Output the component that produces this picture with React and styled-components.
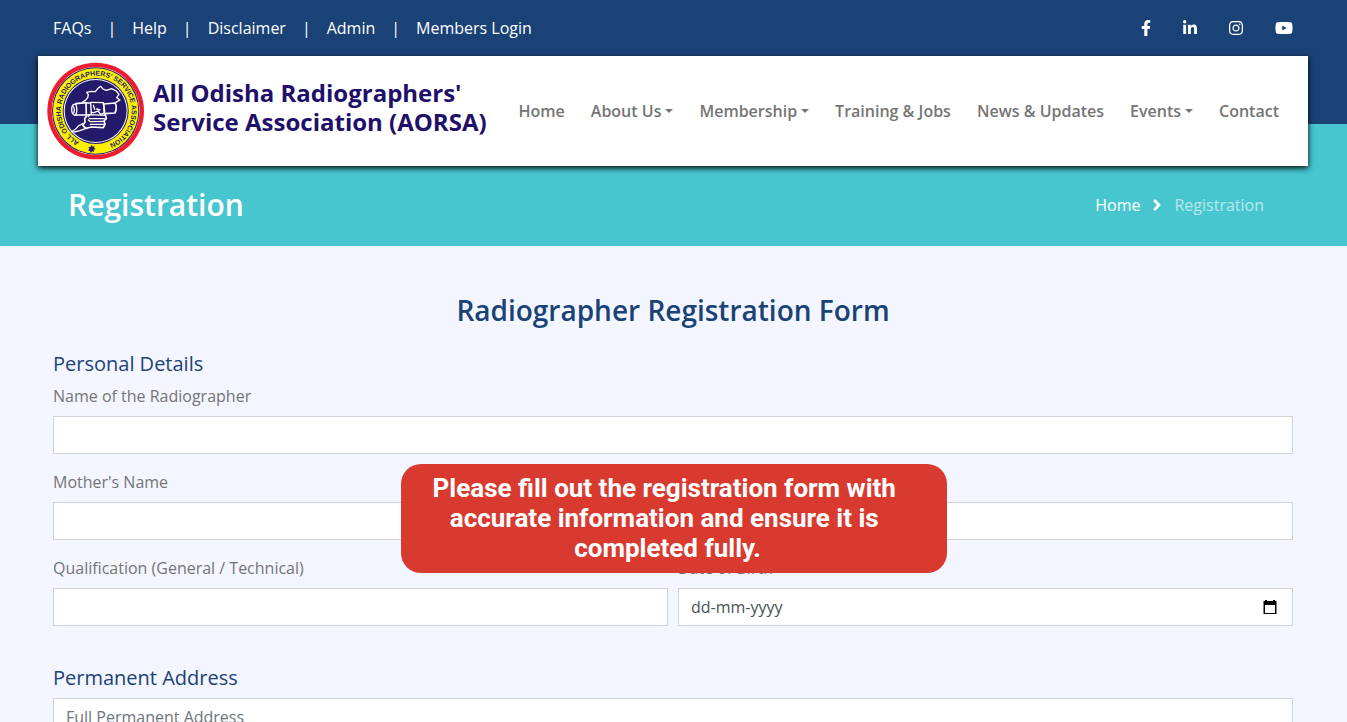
import React from "react";
import styled, { createGlobalStyle } from "styled-components";
import {
  FaFacebookF,
  FaLinkedinIn,
  FaInstagram,
  FaYoutube,
  FaAngleRight,
} from "react-icons/fa";

const topLinks = ["FAQs", "Help", "Disclaimer", "Admin", "Members Login"];

const socials = [
  { label: "Facebook", Icon: FaFacebookF, width: 10 },
  { label: "LinkedIn", Icon: FaLinkedinIn, width: 14 },
  { label: "Instagram", Icon: FaInstagram, width: 14 },
  { label: "YouTube", Icon: FaYoutube, width: 18 },
];

const navItems = [
  { label: "Home" },
  { label: "About Us", menu: true },
  { label: "Membership", menu: true },
  { label: "Training & Jobs" },
  { label: "News & Updates" },
  { label: "Events", menu: true },
  { label: "Contact" },
];

const Emblem = () => (
  <EmblemSvg viewBox="0 0 300 300" role="img" aria-label="AORSA emblem">
    <defs>
      <path id="ring" d="M100 243 A106 106 0 1 1 176 253" />
    </defs>
    <circle cx="149" cy="150" r="145" fill="#ed1c2e" />
    <circle cx="149" cy="150" r="132" fill="#fff" />
    <circle cx="149" cy="150" r="131" fill="#241a6b" />
    <circle cx="149" cy="150" r="128" fill="#fdf100" />
    <circle cx="149" cy="150" r="99" fill="#241a6b" />
    <circle cx="149" cy="150" r="96" fill="#fff" />
    <circle cx="149" cy="150" r="93" fill="#241a6b" />
    <EmblemText>
      <textPath href="#ring">ALL ODISHA RADIOGRAPHERS&apos; SERVICE ASSOCIATION</textPath>
    </EmblemText>
    <path
      d="M137 252 l3 5 6 -2 -2 6 5 3 -6 3 1 6 -6 -2 -4 5 -2 -6 -6 -1 4 -5 -3 -5 6 -1z"
      fill="#241a6b"
    />
    <g
      transform="translate(72 72)"
      fill="none"
      stroke="#fff"
      strokeWidth="4"
      strokeLinejoin="round"
      strokeLinecap="round"
    >
      {/* state outline */}
      <path d="M38 51 L46 46 L53 38 L55 29 L50 22 L62 19 L76 20 L84 10 L92 4 L99 12 L109 16 L125 11 L139 18 L147 28 L140 38 L150 45 L136 53" />
      {/* camera */}
      <path d="M17 57 Q5 57 5 73 Q5 91 17 91 Q24 74 17 57z" />
      <path d="M11 66 Q15 74 11 84" />
      <path d="M18 56 L48 53 L49 90 L18 90" strokeWidth="5" />
      <path d="M49 54 L62 54 L64 88 L49 90" />
      <path d="M62 52 L100 53 L103 84 L92 88 L84 78 L72 83 L64 82" />
      <path d="M70 61 L74 73 M80 72 L90 75" />
      <path d="M101 57 L136 54 Q142 70 135 84 L104 86z" strokeWidth="5" />
      {/* fist */}
      <path d="M50 92 L44 101 L45 112 L38 121 L48 130 L64 126 L100 128 L105 118 L102 108 L109 101 L106 88" strokeWidth="5" />
      <path d="M55 95 L60 89 L106 91 M58 101 L103 101 M55 105 L61 110 L102 109 M61 118 L102 118" />
      <path d="M5 140 Q20 132 25 123 L38 116 M12 141 L30 137 L48 130" />
    </g>
  </EmblemSvg>
);

const Field = ({ id, label, children }) => (
  <Group>
    <Label htmlFor={id}>{label}</Label>
    {children || <Input id={id} type="text" />}
  </Group>
);

const App = () => {
  return (
    <>
      <GlobalStyle />
      <Header>
        <TopBar>
          <TopLinks aria-label="Quick links">
            {topLinks.map((text, i) => (
              <React.Fragment key={text}>
                {i > 0 && <span>|</span>}
                <a href="#">{text}</a>
              </React.Fragment>
            ))}
          </TopLinks>
          <Socials>
            {socials.map(({ label, Icon, width }) => (
              <SocialLink href="#" key={label} aria-label={label} $width={width}>
                <Icon />
              </SocialLink>
            ))}
          </Socials>
        </TopBar>

        <NavBar>
          <Brand href="#">
            <Emblem />
            <BrandName>
              All Odisha Radiographers&apos;
              <br />
              Service Association (AORSA)
            </BrandName>
          </Brand>
          <Nav>
            {navItems.map(({ label, menu }) => (
              <NavLink href="#" key={label} $menu={menu}>
                {label}
              </NavLink>
            ))}
          </Nav>
        </NavBar>

        <TitleBar>
          <PageTitle>Registration</PageTitle>
          <Breadcrumb aria-label="Breadcrumb">
            <a href="#">Home</a>
            <FaAngleRight />
            <span>Registration</span>
          </Breadcrumb>
        </TitleBar>
      </Header>

      <Main>
        <FormTitle>Radiographer Registration Form</FormTitle>
        <form>
          <SectionTitle>Personal Details</SectionTitle>
          <Field id="name" label="Name of the Radiographer" />
          <Field id="mother" label="Mother's Name" />
          <Columns>
            <Field id="qualification" label="Qualification (General / Technical)" />
            <Field id="dob" label="Date of Birth">
              <DateBox>
                <DateInput id="dob" type="text" placeholder="dd-mm-yyyy" />
                <DateButton type="button" aria-label="Open calendar">
                  <svg width="14" height="15" viewBox="0 0 14 15">
                    <path d="M2 0h2v1h6V0h2v1h1.500v13H.500V1H2z" />
                    <path d="M2 5h10v8H2z" fill="#fff" />
                  </svg>
                </DateButton>
              </DateBox>
            </Field>
          </Columns>
          <Section>
            <SectionTitle as="label" htmlFor="address">
              Permanent Address
            </SectionTitle>
            <TextArea id="address" rows="3" placeholder="Full Permanent Address" />
          </Section>
        </form>
      </Main>

      <Notice role="alert">
        Please fill out the registration form with&nbsp;
        <br />
        accurate information and ensure it is&nbsp;
        <br />
        completed fully.
      </Notice>
    </>
  );
};

export default App;

/* Styled Components */
const GlobalStyle = createGlobalStyle`
  *, *::before, *::after {
    box-sizing: border-box;
  }

  html {
    scrollbar-width: none;
  }

  body {
    margin: 0;
    background: #f3f6ff;
    color: #757575;
    font-family: "Open Sans", sans-serif;
    font-size: 16px;
    line-height: 24px;
  }

  a {
    color: inherit;
    text-decoration: none;
  }
`;

const Header = styled.header`
  padding: 0 39px 0 38px;
  background: linear-gradient(#1a4276 124px, #47c6d0 124px);
`;

const TopBar = styled.div`
  display: flex;
  align-items: center;
  justify-content: space-between;
  height: 56px;
  padding: 0 15px;
  color: #fff;
`;

const TopLinks = styled.nav`
  display: flex;
  gap: 16px;
`;

const Socials = styled.div`
  display: flex;
  gap: 32px;
`;

const SocialLink = styled.a`
  display: flex;

  svg {
    width: ${({ $width }) => $width}px;
    height: 16px;
  }
`;

const NavBar = styled.div`
  display: flex;
  align-items: center;
  justify-content: space-between;
  height: 110px;
  padding: 0 29px 0 8px;
  background: #fff;
  box-shadow: 0 2px 6px #000;
`;

const Brand = styled.a`
  display: flex;
  align-items: center;
  gap: 7px;
`;

const EmblemSvg = styled.svg`
  width: 100px;
  height: 100px;
`;

const EmblemText = styled.text`
  fill: #241a6b;
  font-family: "Liberation Sans", sans-serif;
  font-size: 21px;
  font-weight: 700;
`;

const BrandName = styled.span`
  padding-bottom: 8px;
  color: #20106a;
  font-size: 24px;
  font-weight: 700;
  line-height: 29px;
`;

const Nav = styled.nav`
  display: flex;
  gap: 26px;
`;

const NavLink = styled.a`
  font-weight: 600;
  white-space: nowrap;

  &::after {
    content: "";
    display: ${({ $menu }) => ($menu ? "inline-block" : "none")};
    margin-left: 4px;
    vertical-align: 4px;
    border-top: 4px solid;
    border-right: 4px solid transparent;
    border-left: 4px solid transparent;
  }
`;

const TitleBar = styled.div`
  display: flex;
  align-items: center;
  justify-content: space-between;
  height: 80px;
  padding: 0 44px 2px 30px;
  color: #fff;
`;

const PageTitle = styled.h1`
  margin: 0;
  font-size: 30px;
  font-weight: 600;
  line-height: 36px;
`;

const Breadcrumb = styled.nav`
  display: flex;
  align-items: center;
  gap: 12px;

  svg {
    width: 10px;
    height: 18px;
  }

  span {
    opacity: 0.6;
  }
`;

const Main = styled.main`
  padding: 48px 54px 48px 53px;
`;

const FormTitle = styled.h2`
  margin: 0 0 26px;
  color: #1a4276;
  font-size: 28px;
  font-weight: 600;
  line-height: 32px;
  text-align: center;
`;

const Section = styled.section`
  margin-top: 24px;
`;

const SectionTitle = styled.h3`
  display: block;
  margin: 0 0 8px;
  color: #1a4276;
  font-size: 20px;
  font-weight: 400;
  line-height: 24px;
`;

const Group = styled.div`
  margin-bottom: 16px;
`;

const Label = styled.label`
  display: block;
  margin-bottom: 8px;
`;

const Columns = styled.div`
  display: grid;
  grid-template-columns: 1fr 1fr;
  gap: 10px;
`;

const Input = styled.input`
  display: block;
  width: 100%;
  height: 38px;
  padding: 6px 12px;
  border: 1px solid #ced4da;
  border-radius: 0;
  background: #fff;
  color: #495057;
  font: inherit;

  &::placeholder {
    color: #6c757d;
    opacity: 1;
  }
`;

const TextArea = styled(Input).attrs({ as: "textarea" })`
  height: auto;
  resize: none;
`;

const DateBox = styled.div`
  display: flex;
  align-items: center;
  border: 1px solid #ced4da;
  background: #fff;
`;

const DateInput = styled(Input)`
  flex: 1;
  height: 36px;
  border: 0;

  &::placeholder {
    color: #495057;
  }
`;

const DateButton = styled.button`
  display: flex;
  padding: 0 15px;
  border: 0;
  background: none;
  cursor: pointer;
`;

const Notice = styled.div`
  position: fixed;
  bottom: 149px;
  left: 50%;
  transform: translateX(-50%);
  width: 546px;
  max-width: 100%;
  padding: 9px 36px 10px 24px;
  border-radius: 20px;
  background: #d93a30;
  color: #fff;
  font-family: Roboto, sans-serif;
  font-size: 26px;
  font-weight: 700;
  line-height: 30px;
  text-align: center;
`;
